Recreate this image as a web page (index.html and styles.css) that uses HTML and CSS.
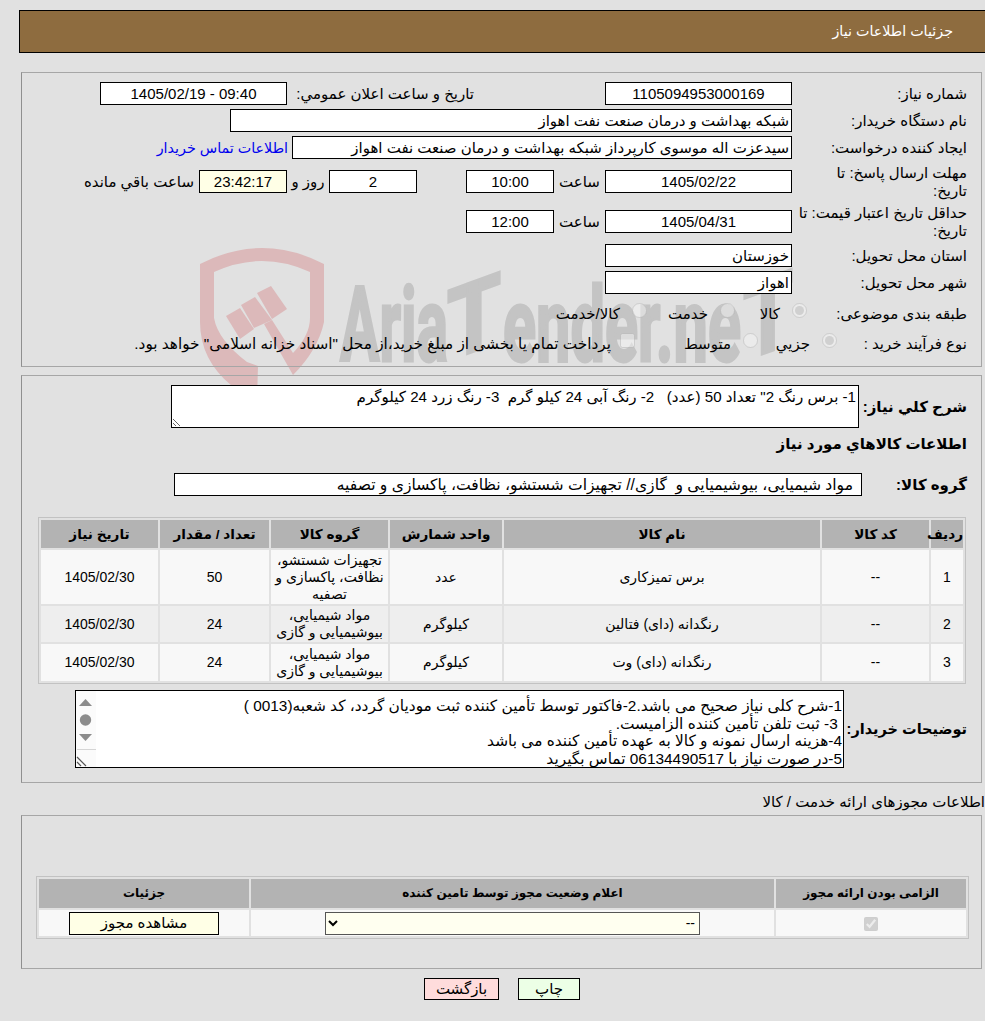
FILE: index.html
```html
<!DOCTYPE html>
<html lang="fa" dir="rtl">
<head>
<meta charset="utf-8">
<title>جزئیات اطلاعات نیاز</title>
<link rel="stylesheet" href="styles.css">
</head>
<body>
<svg class="watermark" width="985" height="1021" viewBox="0 0 985 1021" aria-hidden="true">
  <g fill="#dcb9ba">
    <path fill-rule="evenodd" d="M200 264 Q262 232 324 264 L324 322 Q318 350 293 375 L264 324 L272 320 L293 353 Q310 335 310 318 L310 272 Q262 250 214 272 L214 318 Q218 340 247 362 L258 366 L257 400 L232 386 Q200 360 200 322 Z"/>
    <path d="M226 316 L240 308 L254 329 L240 339 Z"/>
    <path d="M241 305 L255 297 L272 320 L254 328 Z"/>
    <path d="M257 293 L271 286 L287 309 L272 319 Z"/>
  </g>
  <g fill="#c4c4c4" stroke="#c4c4c4" stroke-width="3" font-family="Roboto, 'Liberation Sans', sans-serif" font-weight="700" font-size="104">
    <text direction="ltr" x="340" y="361" textLength="108" lengthAdjust="spacingAndGlyphs">Aria</text>
    <text class="wm-t" direction="ltr" x="0" y="0" transform="translate(447 361) skewY(-20)" textLength="54" lengthAdjust="spacingAndGlyphs">T</text>
    <text direction="ltr" x="503" y="361" textLength="238" lengthAdjust="spacingAndGlyphs">ender.ne</text>
    <text direction="ltr" x="0" y="0" transform="translate(743 361) skewY(-20)" textLength="50" lengthAdjust="spacingAndGlyphs">T</text>
  </g>
</svg>

<header class="page-header">جزئیات اطلاعات نیاز</header>

<section class="panel panel-main">
  <div class="row">
    <div class="label">شماره نياز:</div>
    <div class="field field-md center">1105094953000169</div>
    <div class="label-announce">تاریخ و ساعت اعلان عمومي:</div>
    <div class="field field-md center">09:40 - 1405/02/19</div>
  </div>
  <div class="row row-gap">
    <div class="label">نام دستگاه خريدار:</div>
    <div class="field field-xl">شبکه بهداشت و درمان صنعت نفت اهواز</div>
  </div>
  <div class="row row-gap">
    <div class="label">ايجاد کننده درخواست:</div>
    <div class="field field-lg">سیدعزت اله موسوی کارپرداز شبکه بهداشت و درمان صنعت نفت اهواز</div>
    <a class="contact" href="#">اطلاعات تماس خريدار</a>
  </div>
  <div class="row row-gap-l">
    <div class="label">مهلت ارسال پاسخ: تا<br>تاریخ:</div>
    <div class="field field-md center">1405/02/22</div>
    <div class="unit unit-hour">ساعت</div>
    <div class="field field-sm center">10:00</div>
    <div class="field field-sm center field-days">2</div>
    <div class="unit unit-day">روز و</div>
    <div class="field field-sm center field-clock">23:42:17</div>
    <div class="unit unit-left">ساعت باقي مانده</div>
  </div>
  <div class="row row-gap-xl">
    <div class="label">حداقل تاريخ اعتبار قيمت: تا<br>تاریخ:</div>
    <div class="field field-md center">1405/04/31</div>
    <div class="unit unit-hour">ساعت</div>
    <div class="field field-sm center">12:00</div>
  </div>
  <div class="row row-gap-l">
    <div class="label">استان محل تحويل:</div>
    <div class="field field-md">خوزستان</div>
  </div>
  <div class="row row-gap">
    <div class="label">شهر محل تحويل:</div>
    <div class="field field-md">اهواز</div>
  </div>
  <div class="row row-choice-first">
    <div class="label-choice-a">طبقه بندی موضوعی:</div>
    <label class="opt opt-a"><input class="radio" type="radio" name="cat" checked disabled><span>کالا</span></label>
    <label class="opt opt-b"><input class="radio" type="radio" name="cat" disabled><span>خدمت</span></label>
    <label class="opt"><input class="radio" type="radio" name="cat" disabled><span>کالا/خدمت</span></label>
  </div>
  <div class="row row-choice-second">
    <div class="label-choice-b">نوع فرآیند خرید :</div>
    <label class="opt opt-c"><input class="radio" type="radio" name="proc" checked disabled><span>جزيي</span></label>
    <label class="opt opt-d"><input class="radio" type="radio" name="proc" disabled><span>متوسط</span></label>
    <label class="opt opt-long"><input class="radio" type="checkbox" disabled><span>پرداخت تمام یا بخشی از مبلغ خرید،از محل "اسناد خزانه اسلامی" خواهد بود.</span></label>
  </div>
</section>

<section class="panel panel-items">
  <div class="row desc-row">
    <div class="label-strong desc-label">شرح کلي نياز:</div>
    <textarea class="desc" readonly>1- برس رنگ 2" تعداد 50 (عدد)   2- رنگ آبی 24 کیلو گرم  3- رنگ زرد 24 کیلوگرم</textarea>
  </div>
  <h2 class="section-strong">اطلاعات کالاهاي مورد نياز</h2>
  <div class="row group-row">
    <div class="label-strong group-label">گروه کالا:</div>
    <div class="field field-group">مواد شیمیایی، بیوشیمیایی و  گازی// تجهیزات شستشو، نظافت، پاکسازی و تصفیه</div>
  </div>
  <table class="grid items-table">
    <colgroup>
      <col class="c-idx"><col class="c-code"><col class="c-name"><col class="c-unit"><col class="c-grp"><col class="c-qty"><col class="c-date">
    </colgroup>
    <thead>
      <tr class="head-row"><th>رديف</th><th>کد کالا</th><th>نام کالا</th><th>واحد شمارش</th><th>گروه کالا</th><th>تعداد / مقدار</th><th>تاريخ نياز</th></tr>
    </thead>
    <tbody>
      <tr class="r1"><td>1</td><td>--</td><td>برس تمیزکاری</td><td>عدد</td><td>تجهیزات شستشو، نظافت، پاکسازی و تصفیه</td><td>50</td><td>1405/02/30</td></tr>
      <tr class="r2"><td>2</td><td>--</td><td>رنگدانه (دای) فتالین</td><td>کیلوگرم</td><td>مواد شیمیایی، بیوشیمیایی و گازی</td><td>24</td><td>1405/02/30</td></tr>
      <tr class="r3"><td>3</td><td>--</td><td>رنگدانه (دای) وت</td><td>کیلوگرم</td><td>مواد شیمیایی، بیوشیمیایی و گازی</td><td>24</td><td>1405/02/30</td></tr>
    </tbody>
  </table>
  <div class="row notes-row">
    <div class="label-strong notes-label">توضیحات خریدار:</div>
    <div class="notes">
      <div class="notes-text">
        <div>1-شرح کلی نیاز صحیح می باشد.2-فاکتور توسط تأمین کننده ثبت مودیان گردد، کد شعبه(0013 )</div>
        <div>&nbsp;3- ثبت تلفن تأمین کننده الزامیست.</div>
        <div>4-هزینه ارسال نمونه و کالا به عهده تأمین کننده می باشد</div>
        <div>5-در صورت نیاز با 06134490517 تماس بگیرید</div>
      </div>
      <div class="rail">
        <svg class="rail-art" width="20" height="76" viewBox="0 0 20 76" aria-hidden="true">
          <path d="M3 15 L9.5 8 L16 15 Z" fill="#8c8c8c"/>
          <circle cx="9.5" cy="29" r="5.7" fill="#8c8c8c"/>
          <path d="M3 43 L16 43 L9.5 50 Z" fill="#8c8c8c"/>
          <path d="M1 58.5 H20" stroke="#d5d5d5" fill="none"/>
          <path d="M1 66 L10 75 M1 71 L5 75" stroke="#555" stroke-width="1.2" fill="none"/>
        </svg>
      </div>
    </div>
  </div>
</section>

<div class="license-title">اطلاعات مجوزهای ارائه خدمت / کالا</div>

<section class="panel panel-license">
  <table class="grid license-table">
    <colgroup><col class="l-a"><col class="l-b"><col class="l-c"></colgroup>
    <thead>
      <tr class="lic-head"><th>الزامی بودن ارائه مجوز</th><th>اعلام وضعیت مجوز توسط تامین کننده</th><th>جزئیات</th></tr>
    </thead>
    <tbody>
      <tr class="lic-row">
        <td><input class="lic-check" type="checkbox" checked disabled></td>
        <td><select class="lic-select"><option>--</option></select></td>
        <td><button class="lic-btn" type="button">مشاهده مجوز</button></td>
      </tr>
    </tbody>
  </table>
</section>

<div class="actions">
  <button class="btn btn-print" type="button">چاپ</button>
  <button class="btn btn-back" type="button">بازگشت</button>
</div>
</body>
</html>
```

FILE: styles.css
```css
* { box-sizing: border-box; }
html, body { margin: 0; padding: 0; height: 1021px; overflow: hidden; }
body {
  position: relative;
  background: #e1e1e1;
  color: #000;
  font: 15px/18px "Liberation Sans", "DejaVu Sans", sans-serif;
  padding-top: 10px;
}
.watermark { position: absolute; left: 0; top: 0; z-index: 0; }
.wm-t { font-size: 98px; }
.page-header, .panel, .license-title, .actions { position: relative; z-index: 1; }

.page-header {
  margin-right: 0;
  width: 966px;
  height: 43px;
  background: #8e6c3f;
  border: 1px solid #000;
  border-right: 0;
  color: #fff;
  font-size: 14.3px;
  line-height: 41px;
  padding-right: 32px;
}

.panel {
  margin-right: 3px;
  width: 961px;
  border: 1px solid #a6a6a6;
  border-left-color: #8f8f8f;
  padding-right: 14px;
}
.panel-main { margin-top: 19px; height: 295px; padding-top: 9px; }
.panel-items { margin-top: 8px; height: 408px; padding-top: 9px; }
.panel-license { margin-top: 2px; height: 154px; padding-top: 60px; }

.row { display: flex; align-items: center; height: 23px; }
.row-gap { margin-top: 4px; }
.row-gap-l { margin-top: 11px; }
.row-gap-xl { margin-top: 17px; }

.label { width: 175px; flex: none; padding-left: 2px; }
.label-strong { font-weight: 700; flex: none; white-space: nowrap; }
.label-choice-a { width: 160px; flex: none; }
.label-choice-b { width: 130px; flex: none; }

.field {
  height: 23px;
  background: #fff;
  border: 1px solid #000;
  line-height: 21px;
  padding: 0 2px;
  white-space: nowrap;
  overflow: hidden;
  flex: none;
}
.center { text-align: center; }
.field-md { width: 187px; }
.field-sm { width: 88px; }
.field-lg { width: 500px; }
.field-xl { width: 562px; }
.field-days { margin-right: 49px; }
.field-clock { background: #ffffe6; }
.label-announce { width: 318px; padding-right: 131px; flex: none; white-space: nowrap; }
.contact { color: #0000ee; text-decoration: none; margin-right: 4px; white-space: nowrap; font-size: 14.3px; }
.unit { flex: none; white-space: nowrap; }
.unit-hour { width: 51px; text-align: center; }
.unit-day { width: 42px; text-align: center; }
.unit-left { margin-right: 5px; }

.row-choice-first { margin-top: 8px; }
.row-choice-second { margin-top: 7px; }
.opt { display: flex; align-items: center; gap: 12px; white-space: nowrap; flex: none; }
.opt-a { width: 72px; }
.opt-b { width: 88px; }
.opt-c { width: 79px; }
.opt-d { width: 123px; }
.opt-long { font-size: 15.3px; gap: 9px; }
.radio { margin: 0; width: 15px; height: 15px; flex: none; position: relative; top: -3px; opacity: .75; }

.desc-row { height: 43px; }
.desc-label { width: 108px; }
.desc {
  display: block;
  width: 688px;
  height: 43px;
  border: 1px solid #000;
  border-radius: 0;
  background: #fff;
  padding: 2px;
  margin: 0;
  font: inherit;
  font-size: 15.1px;
  color: #000;
  outline: 0;
  resize: both;
  overflow: hidden;
}
.section-strong { margin: 4px 0 0; height: 23px; font-size: 15px; font-weight: 700; line-height: 23px; }
.group-row { margin-top: 18px; }
.group-label { width: 105px; }
.field-group { width: 688px; padding: 0 8px; font-size: 15.6px; white-space: pre; }

.grid { border-collapse: separate; border-spacing: 2px; table-layout: fixed; border: 1px solid #c2c2c2; font-size: 14px; line-height: 17px; }
.grid th { background: #b3b3b3; font-size: 13.6px; font-weight: 700; padding: 0; text-align: center; }
.grid td { text-align: center; padding: 0; }
.items-table { width: 928px; margin-top: 21px; margin-right: 1px; }
.c-idx { width: 32px; } .c-code { width: 107px; } .c-name { width: 316px; } .c-unit { width: 112px; }
.c-grp { width: 117px; } .c-qty { width: 109px; } .c-date { width: 117px; }
.head-row { height: 28px; }
.r1 { height: 54px; background: #f8f8f8; }
.r2 { height: 36px; background: #eee; }
.r3 { height: 37px; background: #f8f8f8; }

.notes-row { height: 78px; margin-top: 6px; }
.notes-label { width: 123px; font-size: 14.5px; }
.notes { width: 769px; height: 78px; background: #fff; border: 1px solid #000; display: flex; flex: none; font-size: 15.4px; line-height: 17.5px; }
.notes-text { flex: 1; padding: 6px 1px 0 0; white-space: nowrap; overflow: hidden; }
.rail { width: 20px; flex: none; background: #fbfbfb; }
.rail-art { display: block; }

.license-title { margin-top: 7px; height: 23px; line-height: 23px; white-space: nowrap; }

.license-table { width: 933px; margin-right: -2px; }
.license-table th { font-size: 12px; }
.l-a { width: 190px; } .l-b { width: 523px; } .l-c { width: 210px; }
.lic-head { height: 29px; }
.lic-row { height: 26px; background: #f8f8f8; }
.lic-check { margin: 0; vertical-align: middle; width: 14px; height: 14px; }
.lic-select {
  width: 375px;
  height: 23px;
  background: #fffff0;
  border: 1px solid #555;
  border-radius: 0;
  font: inherit;
  color: #000;
  vertical-align: middle;
}
.lic-btn {
  width: 150px;
  height: 23px;
  background: #ffffe6;
  border: 1px solid #000;
  border-radius: 0;
  font: 15px "Liberation Sans", "DejaVu Sans", sans-serif;
  color: #000;
  padding: 0;
  vertical-align: middle;
}

.actions { display: flex; justify-content: center; gap: 19px; margin-top: 9px; padding-left: 19px; }
.btn { height: 22px; border: 1px solid #000; border-radius: 0; font: 15px "Liberation Sans", "DejaVu Sans", sans-serif; color: #000; padding: 0; }
.btn-print { width: 62px; background: #ecffe6; }
.btn-back { width: 75px; background: #ffdcdc; }
```
